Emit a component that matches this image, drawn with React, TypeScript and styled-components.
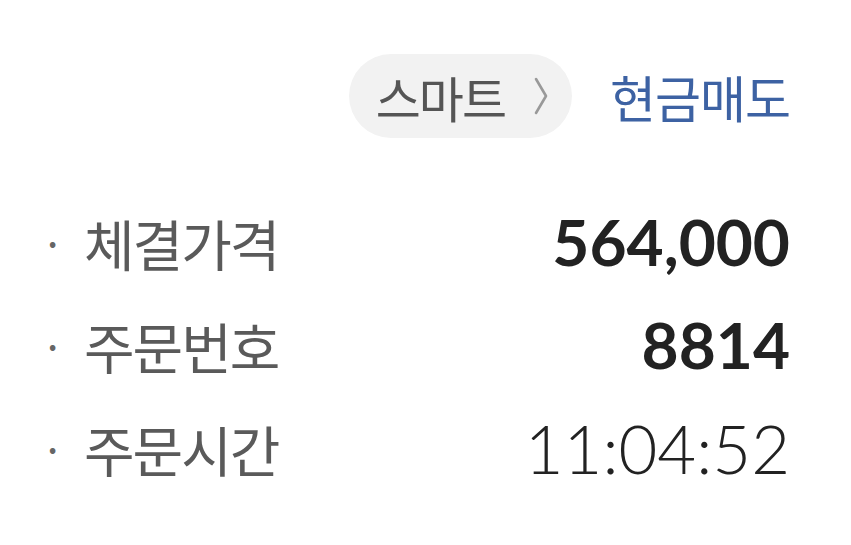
import React from "react";
import styled, { createGlobalStyle } from "styled-components";

const Global = createGlobalStyle`
  html, body { margin: 0; padding: 0; background: #ffffff; }
  body { font-family: "Noto Sans CJK KR", "Noto Sans", sans-serif; }
`;

const Page = styled.div`
  width: 851px;
  height: 545px;
  box-sizing: border-box;
  padding: 54px 61px 0 44px;
  display: flex;
  flex-direction: column;
`;

const Header = styled.div`
  display: flex;
  justify-content: flex-end;
  align-items: center;
  gap: 38px;
`;

const Pill = styled.div`
  height: 84px;
  box-sizing: border-box;
  padding: 0 23px 0 27px;
  border-radius: 42px;
  background: #f2f2f2;
  display: flex;
  align-items: center;
  gap: 28px;
  font-size: 49px;
  color: #555555;
  letter-spacing: -2px;
`;

const Chevron = styled.svg`
  width: 16px;
  height: 38px;
`;

const TypeLabel = styled.div`
  font-size: 50px;
  color: #3d62a3;
  letter-spacing: -1px;
`;

const List = styled.div`
  margin-top: 52px;
  display: flex;
  flex-direction: column;
`;

const Row = styled.div`
  height: 103px;
  display: flex;
  align-items: center;
  justify-content: space-between;
`;

const Label = styled.div`
  display: flex;
  align-items: center;
  font-size: 55px;
  color: #5a5a5a;
  letter-spacing: -2px;
`;

const Bullet = styled.span`
  width: 40px;
  font-size: 42px;
  color: #666666;
  line-height: 1;
  margin-left: -3px;
  margin-right: 3px;
`;

const Value = styled.div<{ $weight: number; $size: number }>`
  font-family: Lato, "Noto Sans", sans-serif;
  font-size: ${(p) => p.$size}px;
  font-weight: ${(p) => p.$weight};
  color: #222222;
`;

const rows = [
  { label: "체결가격", value: "564,000", weight: 700, size: 64 },
  { label: "주문번호", value: "8814", weight: 700, size: 64 },
  { label: "주문시간", value: "11:04:52", weight: 300, size: 67 },
];

export default function App() {
  return (
    <>
      <Global />
      <Page>
        <Header>
          <Pill>
            <span>스마트</span>
            <Chevron viewBox="0 0 16 38">
              <path d="M3 2 L13 19 L3 36" fill="none" stroke="#999999" strokeWidth="2.6" strokeLinecap="round" strokeLinejoin="round" />
            </Chevron>
          </Pill>
          <TypeLabel>현금매도</TypeLabel>
        </Header>
        <List>
          {rows.map((r) => (
            <Row key={r.label}>
              <Label>
                <Bullet>·</Bullet>
                {r.label}
              </Label>
              <Value $weight={r.weight} $size={r.size}>{r.value}</Value>
            </Row>
          ))}
        </List>
      </Page>
    </>
  );
}
